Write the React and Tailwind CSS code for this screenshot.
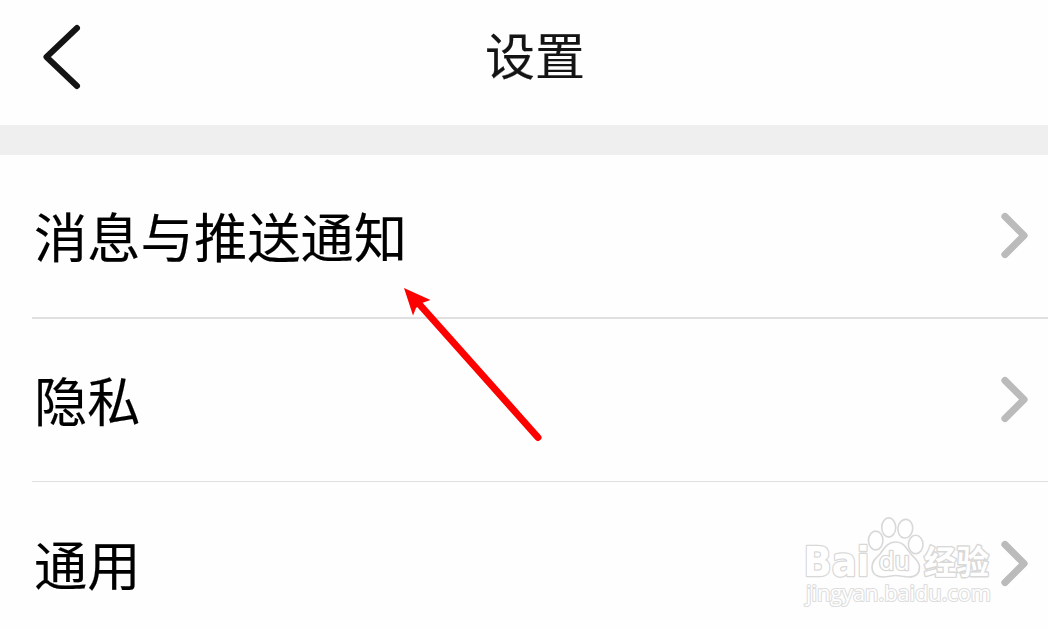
const rows = [
  { label: "消息与推送通知", box: "h-[164px] border-b-2" },
  { label: "隐私", box: "h-[163px] border-b" },
  { label: "通用", box: "h-[165px] border-b" },
];

function Chevron() {
  return (
    <svg className="h-12 w-[30px] shrink-0" viewBox="0 0 30 48" fill="none">
      <path d="M5 4.5 L24 23.5 L5 42.5" stroke="#bbbbbb" strokeWidth="7.2" strokeLinecap="round" strokeLinejoin="round" />
    </svg>
  );
}

function Arrow() {
  return (
    <svg className="pointer-events-none absolute left-[400px] top-[284px] h-[160px] w-[145px]" viewBox="400 284 145 160">
      <path d="M420 305 L538 437.5" stroke="#ff0000" strokeWidth="7" strokeLinecap="round" />
      <path d="M404 288 L430.5 300 L422 303 L416 308 L413 315.5 Z" fill="#ff0000" />
    </svg>
  );
}

function Watermark() {
  return (
    <svg className="pointer-events-none absolute left-[798px] top-[510px] h-[105px] w-[200px]" viewBox="798 510 200 105">
      <g fill="#ffffff" stroke="#d8d8d8" strokeWidth="1.6" strokeLinejoin="round">
        <text x="803.5" y="575.5" fontSize="41" fontWeight="700" textLength="66" lengthAdjust="spacingAndGlyphs" fontFamily="DejaVu Sans, sans-serif" strokeWidth="2.6" paintOrder="stroke">Bai</text>
        <ellipse cx="875.7" cy="540.5" rx="7.2" ry="9.4" />
        <ellipse cx="888.7" cy="527.5" rx="7" ry="9.6" />
        <ellipse cx="905.3" cy="528.7" rx="7.4" ry="9.4" transform="rotate(8 905.3 528.7)" />
        <ellipse cx="915.7" cy="544.5" rx="7.3" ry="9.2" />
        <path d="M895.5 542 C887 542 884 549 880 554 C876 558 872 561 872 567 C872 574 877 577 883 577 C888 577 891 575.5 895.5 575.5 C900 575.5 904 577 909 577 C916 577 919.5 573 919.5 567 C919.5 561 914 558 910 553 C906 548 904 542 895.5 542 Z" />
        <text x="879" y="570" fontSize="24" textLength="31" lengthAdjust="spacingAndGlyphs" fontFamily="DejaVu Sans, sans-serif" strokeWidth="2.6" paintOrder="stroke">du</text>
        <text x="924" y="573.5" fontSize="33" textLength="65" lengthAdjust="spacingAndGlyphs" fontFamily="Noto Sans CJK SC, sans-serif" fontWeight="700" strokeWidth="2.8" paintOrder="stroke">经验</text>
        <text x="806" y="601" fontSize="22" textLength="185" lengthAdjust="spacingAndGlyphs" fontFamily="Open Sans, sans-serif" stroke="#dddddd" strokeWidth="2.2" paintOrder="stroke">jingyan.baidu.com</text>
      </g>
    </svg>
  );
}

export default function App() {
  return (
    <main className="relative h-[630px] w-[1048px] overflow-hidden bg-[#fefefe] font-['Noto_Sans_CJK_SC',sans-serif] text-black [-webkit-text-stroke:0.15px]">
      <header className="grid h-[125px] grid-cols-[1fr_auto_1fr] items-start text-[#141414]">
        <button aria-label="返回" className="ml-10 mt-[22px] h-[70px] w-[44px]">
          <svg className="h-[70px] w-[44px]" viewBox="0 0 44 70" fill="none">
            <path d="M37 6 L6.5 35 L37 64" stroke="#141414" strokeWidth="6" strokeLinecap="round" strokeLinejoin="round" />
          </svg>
        </button>
        <h1 className="ml-[22px] mt-[17px] text-[50px] leading-[72px]">设置</h1>
      </header>
      <div className="h-[30px] bg-[#efefef]" />
      <ul>
        {rows.map((row) => (
          <li key={row.label} className={`ml-8 flex items-center justify-between border-[#e0e0e0] pl-0.5 pr-[18px] ${row.box}`}>
            <span className="mb-[3px] text-[53.3px] leading-[76px]">{row.label}</span>
            <Chevron />
          </li>
        ))}
      </ul>
      <Watermark />
      <Arrow />
    </main>
  );
}
